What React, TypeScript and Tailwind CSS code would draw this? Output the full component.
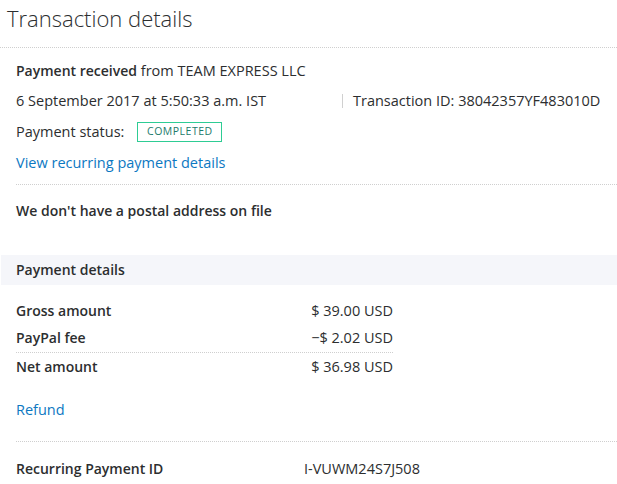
import React from "react";

export default function App() {
  return (
    <div
      className="w-[617px] h-[484px] bg-white overflow-hidden text-[14.5px] text-[#2c2e2f]"
      style={{ fontFamily: '"Open Sans", "Noto Sans", sans-serif' }}
    >
      <div className="h-[48px] border-b border-dotted border-[#cfcfcf] pl-[7px] pt-[2px]">
        <h1 className="text-[22px] font-light leading-[32px] text-[#2c2e2f]">Transaction details</h1>
      </div>

      <div className="ml-[16px] pt-[8px] pb-[6px] border-b border-dotted border-[#cfcfcf]">
        <div className="leading-[30px]">
          <span className="font-semibold text-[14px]">Payment received</span> from TEAM EXPRESS LLC
        </div>
        <div className="leading-[30px] flex">
          <span className="w-[326px]">6 September 2017 at 5:50:33 a.m. IST</span>
          <span className="flex items-center">
            <span className="inline-block w-px h-[14px] bg-[#d0d0d0] mr-[10px]" />
            Transaction ID: 38042357YF483010D
          </span>
        </div>
        <div className="h-[31px] pt-[1px] flex items-center">
          <span>Payment status:</span>
          <span className="ml-[13px] h-[20px] w-[85px] border border-[#2ecc94] flex items-center justify-center text-[10.5px] tracking-[0.5px] text-[#1b7a6a]">
            COMPLETED
          </span>
        </div>
        <div className="leading-[30px] pt-[1px] text-[#0c78c2]">View recurring payment details</div>
      </div>

      <div className="pl-[16px] pt-[11px] leading-[30px] font-semibold text-[14px]">
        We don't have a postal address on file
      </div>

      <div className="mt-[29px] ml-[1px] h-[30px] bg-[#f5f6fa] pl-[15px] leading-[30px] font-semibold text-[14px]">
        Payment details
      </div>

      <div className="ml-[16px] w-[377px] mt-[12px]">
        <div className="flex justify-between leading-[28px]">
          <span className="font-semibold text-[14px]">Gross amount</span>
          <span>$ 39.00 USD</span>
        </div>
        <div className="flex justify-between h-[28px] leading-[26px] border-b border-dotted border-[#cfcfcf]">
          <span className="font-semibold text-[14px]">PayPal fee</span>
          <span>−$ 2.02 USD</span>
        </div>
        <div className="flex justify-between leading-[28px]">
          <span className="font-semibold text-[14px]">Net amount</span>
          <span>$ 36.98 USD</span>
        </div>
      </div>

      <div className="ml-[16px] mt-[15px] leading-[28px] text-[#0c78c2]">Refund</div>

      <div className="ml-[16px] mt-[17px] border-t border-dotted border-[#cfcfcf]" />

      <div className="ml-[16px] mt-[13px] flex leading-[28px]">
        <span className="w-[288px] font-semibold text-[14px]">Recurring Payment ID</span>
        <span>I-VUWM24S7J508</span>
      </div>
    </div>
  );
}
